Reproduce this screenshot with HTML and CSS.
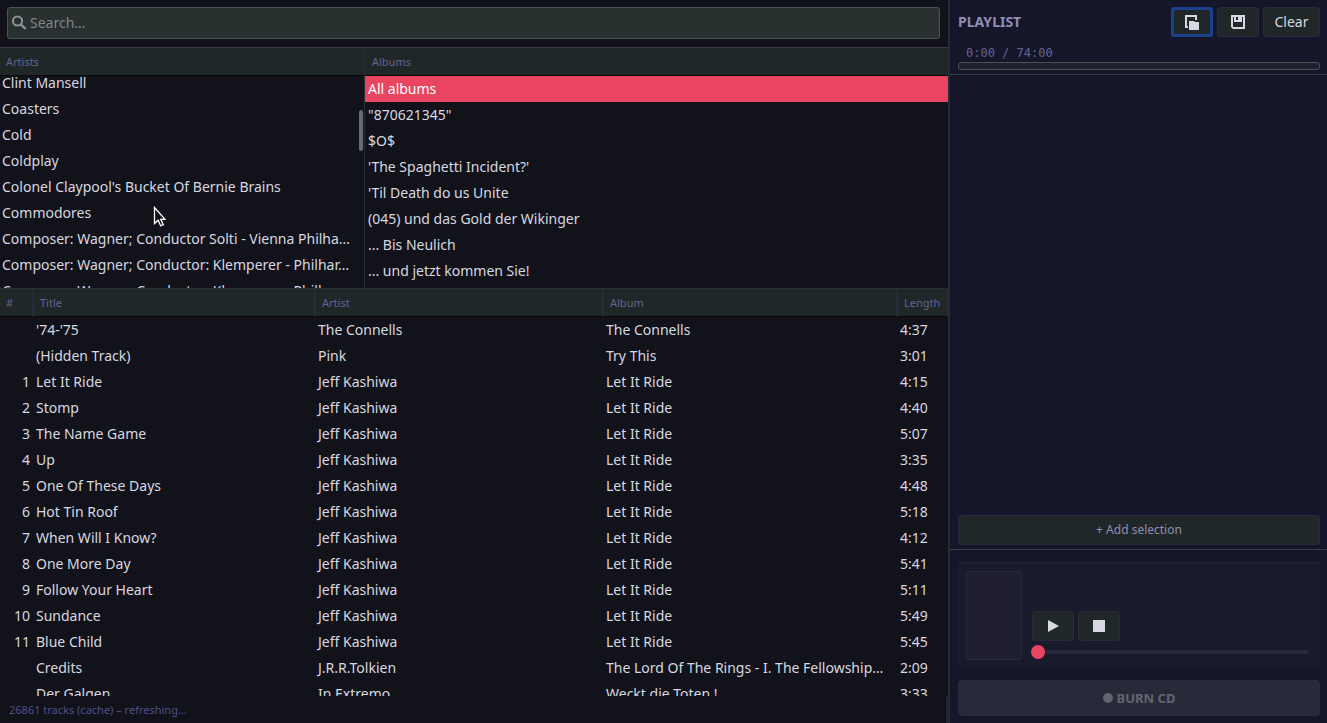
FILE: index.html
```html
<!DOCTYPE html>
<html lang="en">
<head>
<meta charset="utf-8">
<title>Playlist</title>
<link rel="stylesheet" href="styles.css">
</head>
<body>
<div class="app">
  <main class="library">
    <div class="search-bar">
      <div class="search">
        <svg class="search-icon" viewBox="0 0 16 16" aria-hidden="true"><circle cx="6.5" cy="6" r="4.6" fill="none" stroke="currentColor" stroke-width="2"/><path d="M9.8 9.3L14.6 14" stroke="currentColor" stroke-width="2.4"/></svg>
        <input class="search-input" type="text" placeholder="Search…" aria-label="Search">
      </div>
    </div>
    <div class="browser">
      <section class="pane artists">
        <h2 class="head">Artists</h2>
        <div class="pane-body">
          <ul class="list list-scrolled">
            <li>Clint Mansell</li>
            <li>Coasters</li>
            <li>Cold</li>
            <li>Coldplay</li>
            <li>Colonel Claypool's Bucket Of Bernie Brains</li>
            <li>Commodores</li>
            <li>Composer: Wagner; Conductor Solti - Vienna Philha…</li>
            <li>Composer: Wagner; Conductor: Klemperer - Philhar…</li>
            <li>Composer: Wagner; Conductor: Klemperer - Philh…</li>
          </ul>
          <div class="scroll-thumb"></div>
        </div>
      </section>
      <section class="pane">
        <h2 class="head">Albums</h2>
        <div class="pane-body">
          <ul class="list">
            <li class="selected">All albums</li>
            <li>"870621345"</li>
            <li>$O$</li>
            <li>'The Spaghetti Incident?'</li>
            <li>'Til Death do us Unite</li>
            <li>(045) und das Gold der Wikinger</li>
            <li>... Bis Neulich</li>
            <li>... und jetzt kommen Sie!</li>
          </ul>
        </div>
      </section>
    </div>
    <div class="tracks">
      <table class="track-table">
        <colgroup><col class="c-num"><col class="c-title"><col class="c-artist"><col class="c-album"><col class="c-length"></colgroup>
        <thead><tr><th>#</th><th>Title</th><th>Artist</th><th>Album</th><th>Length</th></tr></thead>
        <tbody>
          <tr><td></td><td>'74-'75</td><td>The Connells</td><td>The Connells</td><td>4:37</td></tr>
          <tr><td></td><td>(Hidden Track)</td><td>Pink</td><td>Try This</td><td>3:01</td></tr>
          <tr><td>1</td><td>Let It Ride</td><td>Jeff Kashiwa</td><td>Let It Ride</td><td>4:15</td></tr>
          <tr><td>2</td><td>Stomp</td><td>Jeff Kashiwa</td><td>Let It Ride</td><td>4:40</td></tr>
          <tr><td>3</td><td>The Name Game</td><td>Jeff Kashiwa</td><td>Let It Ride</td><td>5:07</td></tr>
          <tr><td>4</td><td>Up</td><td>Jeff Kashiwa</td><td>Let It Ride</td><td>3:35</td></tr>
          <tr><td>5</td><td>One Of These Days</td><td>Jeff Kashiwa</td><td>Let It Ride</td><td>4:48</td></tr>
          <tr><td>6</td><td>Hot Tin Roof</td><td>Jeff Kashiwa</td><td>Let It Ride</td><td>5:18</td></tr>
          <tr><td>7</td><td>When Will I Know?</td><td>Jeff Kashiwa</td><td>Let It Ride</td><td>4:12</td></tr>
          <tr><td>8</td><td>One More Day</td><td>Jeff Kashiwa</td><td>Let It Ride</td><td>5:41</td></tr>
          <tr><td>9</td><td>Follow Your Heart</td><td>Jeff Kashiwa</td><td>Let It Ride</td><td>5:11</td></tr>
          <tr><td>10</td><td>Sundance</td><td>Jeff Kashiwa</td><td>Let It Ride</td><td>5:49</td></tr>
          <tr><td>11</td><td>Blue Child</td><td>Jeff Kashiwa</td><td>Let It Ride</td><td>5:45</td></tr>
          <tr><td></td><td>Credits</td><td>J.R.R.Tolkien</td><td>The Lord Of The Rings - I. The Fellowship…</td><td>2:09</td></tr>
          <tr><td></td><td>Der Galgen</td><td>In Extremo</td><td>Weckt die Toten !</td><td>3:33</td></tr>
        </tbody>
      </table>
    </div>
    <footer class="status">26861 tracks (cache) – refreshing…</footer>
  </main>

  <aside class="side">
    <header class="side-head">
      <h1 class="side-title">PLAYLIST</h1>
      <button class="btn icon-btn focused" type="button" aria-label="Open playlist"><svg viewBox="0 0 16 16" aria-hidden="true"><path d="M1 1h12v5h-2V3H3v9h1v2H1z"/><path d="M5 7h5l1 1h4v8H5z"/></svg></button>
      <button class="btn icon-btn" type="button" aria-label="Save playlist"><svg viewBox="0 0 16 16" aria-hidden="true"><path fill-rule="evenodd" d="M1 1h14v14H3l-2-2zM3 3v10h10V3h-1v5H4V3zM6 3v3h2V3z"/></svg></button>
      <button class="btn clear-btn" type="button">Clear</button>
    </header>
    <div class="capacity">
      <div class="capacity-text">0:00 / 74:00</div>
      <div class="capacity-bar"></div>
    </div>
    <div class="playlist"></div>
    <div class="add-row"><button class="btn add-btn" type="button">+ Add selection</button></div>
    <div class="bottom">
      <section class="player">
        <div class="cover"></div>
        <div class="controls">
          <div class="transport">
            <button class="btn icon-btn" type="button" aria-label="Play"><svg viewBox="0 0 16 16" aria-hidden="true"><path d="M3 2l11 6-11 6z"/></svg></button>
            <button class="btn icon-btn" type="button" aria-label="Stop"><svg viewBox="0 0 16 16" aria-hidden="true"><path d="M2 2h12v12H2z"/></svg></button>
          </div>
          <input class="seek" type="range" min="0" max="100" value="0" aria-label="Position">
        </div>
      </section>
      <button class="burn" type="button" disabled><span class="dot"></span>BURN CD</button>
    </div>
  </aside>
</div>
<svg class="cursor" viewBox="0 0 14 22" aria-hidden="true"><path d="M2.500 1.500v16l3.600-3.300 2.600 5.600 2.600-1.200-2.500-5.300h4.200z" fill="#111118" stroke="#fff" stroke-width="1.300"/></svg>
</body>
</html>
```

FILE: styles.css
```css
* { box-sizing: border-box; }
body {
  margin: 0;
  background: #12121a;
  color: #d8d8e0;
  font-family: "Noto Sans", sans-serif;
  font-size: 14px;
  line-height: 26px;
}
h1, h2, ul { margin: 0; padding: 0; }
button, input { font: inherit; color: inherit; margin: 0; }
.app {
  display: grid;
  grid-template-columns: minmax(0, 1fr) 379px;
  height: 100vh;
  overflow: hidden;
}
.library { display: flex; flex-direction: column; min-height: 0; }

.search-bar { padding: 7px 8px 8px 7px; border-bottom: 1px solid #3c3c49; }
.search {
  display: flex;
  align-items: center;
  gap: 3px;
  height: 32px;
  padding: 0 3px;
  background: #293030;
  border: 1px solid #4b5555;
  border-radius: 3px;
}
.search-icon { flex: none; width: 16px; height: 16px; color: #8e9292; }
.search-input {
  flex: 1;
  min-width: 0;
  height: 26px;
  padding: 0;
  border: 0;
  background: none;
  outline: none;
}
.search-input::placeholder { color: #808584; opacity: 1; }

.browser { display: flex; flex: none; height: 33.200vh; }
.pane { flex: 1; min-width: 0; display: flex; flex-direction: column; }
.artists { flex: none; width: 38.500%; border-right: 1px solid #273036; }
.head, .track-table th {
  height: 28px;
  padding: 0 6px;
  background: #202728;
  border-bottom: 1px solid #08080c;
  color: #646490;
  font-size: 11px;
  font-weight: 400;
  line-height: 27px;
  text-align: left;
}
.pane-body { position: relative; flex: 1; min-height: 0; overflow: hidden; }
.list { list-style: none; }
.list-scrolled { margin-top: -6px; }
.list li {
  height: 26px;
  padding: 0 2px;
  white-space: nowrap;
}
.list .selected { background: #e94560; color: #fff; }
.pane + .pane .head { padding: 0 7px; }
.pane + .pane li { padding: 0 3px; }
.scroll-thumb {
  position: absolute;
  top: 34px;
  right: 1px;
  width: 4px;
  height: 41px;
  border-radius: 2px;
  background: #666b6c;
}

.tracks { flex: 1; min-height: 0; overflow: hidden; border-top: 1px solid #273036; }
.track-table { width: 100%; table-layout: fixed; border-collapse: separate; border-spacing: 0; }
.c-num { width: 34px; }
.c-title { width: 282px; }
.c-artist { width: 288px; }
.c-length { width: 50px; }
.track-table th { border-right: 2px solid #292a3b; }
.track-table th:last-child { border-right-width: 1px; padding-right: 0; }
.track-table td { height: 26px; padding: 0 2px; white-space: nowrap; overflow: hidden; }
.track-table td:first-child { padding-right: 4px; text-align: right; }
.status { flex: none; height: 27px; padding-left: 9px; border-right: 2px solid #232334; color: #50508a; font-size: 11px; line-height: 28px; }

.side {
  display: flex;
  flex-direction: column;
  min-width: 0;
  background: #16162a;
  border-left: 2px solid #222c34;
}
.side-head { display: flex; align-items: center; gap: 4px; padding: 7px 7px 0 8px; }
.side-title { flex: 1; color: #8e8eb4; font-size: 14px; font-weight: 700; line-height: 30px; }
.btn {
  height: 30px;
  padding: 0;
  border: 1px solid #2a2a3c;
  border-radius: 3px;
  background: #202728;
  line-height: 26px;
}
.icon-btn { display: flex; align-items: center; justify-content: center; width: 42px; }
.icon-btn svg { flex: none; width: 16px; height: 16px; fill: #d8d8e2; }
.focused { border: 3px solid #1b418c; }
.clear-btn { width: 57px; }
.capacity { padding: 7px 7px 4px 8px; border-bottom: 1px solid #3c3c49; }
.capacity-text { padding-left: 8px; color: #646494; font-family: "DejaVu Sans Mono", monospace; font-size: 12px; line-height: 18px; }
.capacity-bar { height: 8px; border: 1px solid #4b5058; border-radius: 3px; background: #20202f; }
.playlist { flex: 1; }
.add-row { padding: 0 7px 4px 8px; }
.add-btn { width: 100%; color: #8e8eac; font-size: 12px; }
.bottom { padding: 12px 7px 7px 8px; border-top: 1px solid #3c3c49; }
.player {
  display: flex;
  gap: 9px;
  height: 106px;
  padding: 8px;
  border-top: 1px solid #202032;
  background: #1a1a2d;
}
.cover { flex: none; width: 56px; height: 89px; border: 1px solid #2a2a3c; border-radius: 3px; background: #201f30; }
.controls { flex: 1; min-width: 0; padding-top: 40px; }
.transport { display: flex; gap: 4px; padding-left: 1px; }
.seek { display: block; appearance: none; width: 100%; height: 14px; margin-top: 4px; padding-right: 3px; background: none; }
.seek::-webkit-slider-runnable-track { height: 4px; border-radius: 2px; background: #29293d; }
.seek::-webkit-slider-thumb { appearance: none; width: 14px; height: 14px; margin-top: -5px; border-radius: 50%; background: #e94560; }
.burn {
  display: flex;
  align-items: center;
  justify-content: center;
  gap: 4px;
  width: 100%;
  height: 36px;
  margin-top: 12px;
  border: 0;
  border-radius: 4px;
  background: #292a39;
  color: #62656e;
  font-size: 13px;
  font-weight: 700;
}
.dot { width: 10px; height: 10px; border-radius: 50%; background: #62656e; }
.cursor { position: absolute; left: 152px; top: 206px; width: 14px; height: 22px; }
```
